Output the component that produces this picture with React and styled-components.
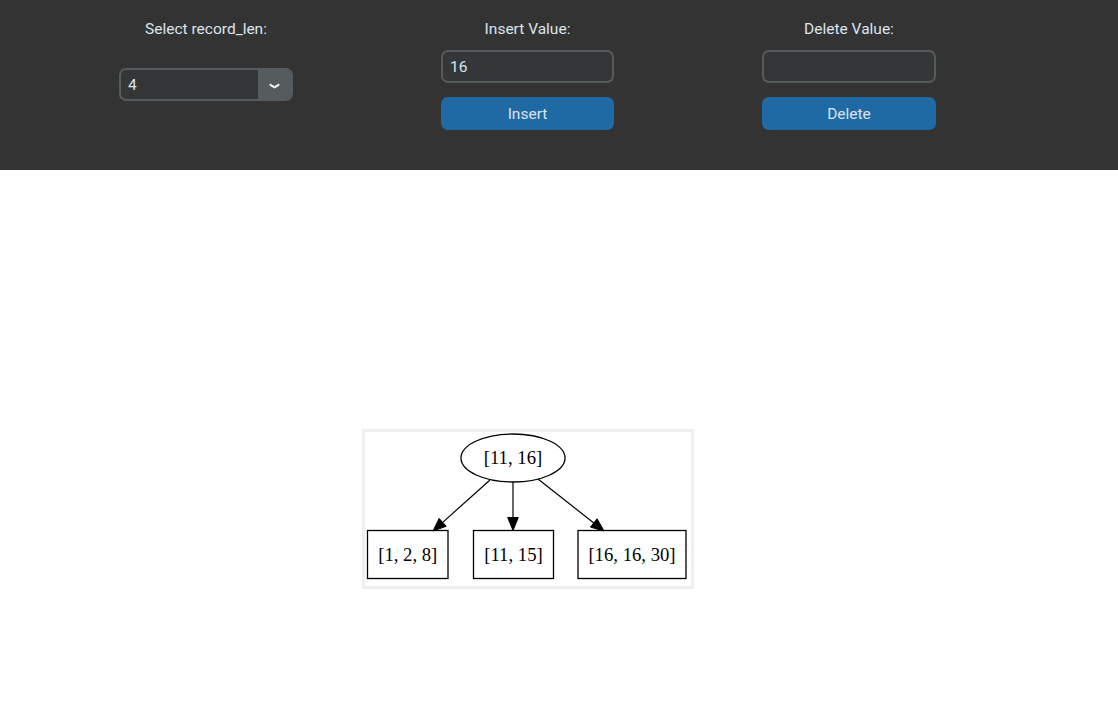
import React from 'react';
import styled, {createGlobalStyle} from 'styled-components';

const GlobalStyle = createGlobalStyle`
  html, body {
    margin: 0;
    padding: 0;
    background: #ffffff;
  }
  body {
    font-family: Roboto, "Liberation Sans", sans-serif;
  }
`

const Header = styled.header`
  height: 170px;
  background-color: #333333;
`
const HeaderInner = styled.div`
  display: flex;
  padding-left: 119px;
  gap: 148px;
`
const Column = styled.div`
  width: ${p => p.w}px;
  display: flex;
  flex-direction: column;
  align-items: stretch;
  padding-top: 20px;
`
const Label = styled.div`
  color: #dce4ee;
  font-size: 15.5px;
  line-height: 18px;
  text-align: center;
  margin-bottom: ${p => p.gap}px;
`
const Field = styled.div`
  height: 33px;
  box-sizing: border-box;
  border: 2px solid #565b5e;
  border-radius: 7px;
  background-color: #343638;
  color: #dce4ee;
  font-size: 15.5px;
  display: flex;
  align-items: center;
  padding-left: 7px;
  overflow: hidden;
`
const Combo = styled(Field)`
  padding-left: 0;
  justify-content: space-between;
`
const ComboValue = styled.span`
  padding-left: 7px;
`
const ComboArrow = styled.div`
  width: 33px;
  height: 100%;
  background-color: #565b5e;
  display: flex;
  align-items: center;
  justify-content: center;
  padding-top: 2px;
  box-sizing: border-box;
`
const Button = styled.div`
  height: 33px;
  margin-top: 14px;
  border-radius: 7px;
  background-color: #1f6aa5;
  color: #dce4ee;
  font-size: 15.5px;
  display: flex;
  align-items: center;
  justify-content: center;
`

const Main = styled.main`
  width: 1056px;
  display: flex;
  justify-content: center;
  padding-top: 259px;
`
const Frame = styled.div`
  width: 326px;
  height: 154px;
  border: 3px solid #efefef;
  background: #ffffff;
`

const Chevron = () => (
  <svg width="11" height="6" viewBox="0 0 11 6">
    <path d="M1 1 L5.5 3.6 L10 1 L10 2.4 L5.5 5 L1 2.4 Z" fill="#eef2f5" stroke="#eef2f5" strokeWidth="1" strokeLinejoin="round"/>
  </svg>
)

const Arrow = ({x1, y1, x2, y2}) => {
  const dx = x2 - x1
  const dy = y2 - y1
  const len = Math.hypot(dx, dy)
  const ux = dx / len
  const uy = dy / len
  const bx = x2 - ux * 13
  const by = y2 - uy * 13
  const px = -uy * 5.3
  const py = ux * 5.3
  return (
    <g>
      <line x1={x1} y1={y1} x2={bx} y2={by} stroke="#000" strokeWidth="1.2"/>
      <polygon points={`${x2},${y2} ${bx + px},${by + py} ${bx - px},${by - py}`} fill="#000" stroke="#000" strokeWidth="1"/>
    </g>
  )
}

const TreeNode = ({x, y, w, h, label}) => (
  <g>
    <rect x={x} y={y} width={w} height={h} fill="none" stroke="#000" strokeWidth="1.3"/>
    <text x={x + w / 2} y={y + h / 2 + 6} textAnchor="middle" fontFamily="'Liberation Serif', serif" fontSize="18.7">{label}</text>
  </g>
)

const Tree = () => (
  <svg width="326" height="154" viewBox="365 432 326 154">
    <ellipse cx="513" cy="458" rx="52" ry="24" fill="none" stroke="#000" strokeWidth="1.3"/>
    <text x="513" y="464" textAnchor="middle" fontFamily="'Liberation Serif', serif" fontSize="18.7">[11, 16]</text>
    <Arrow x1={490} y1={480} x2={433} y2={531}/>
    <Arrow x1={513} y1={482} x2={513} y2={530.5}/>
    <Arrow x1={538} y1={479} x2={604} y2={531}/>
    <TreeNode x={367.5} y={530.5} w={80.5} h={48} label="[1, 2, 8]"/>
    <TreeNode x={473.5} y={530.5} w={80} h={48} label="[11, 15]"/>
    <TreeNode x={578} y={530.5} w={108} h={48} label="[16, 16, 30]"/>
  </svg>
)

const App = () => {
  return (
    <>
      <GlobalStyle/>
      <Header>
        <HeaderInner>
          <Column w={174}>
            <Label gap={30}>Select record_len:</Label>
            <Combo>
              <ComboValue>4</ComboValue>
              <ComboArrow><Chevron/></ComboArrow>
            </Combo>
          </Column>
          <Column w={173}>
            <Label gap={12}>Insert Value:</Label>
            <Field>16</Field>
            <Button>Insert</Button>
          </Column>
          <Column w={174}>
            <Label gap={12}>Delete Value:</Label>
            <Field></Field>
            <Button>Delete</Button>
          </Column>
        </HeaderInner>
      </Header>
      <Main>
        <Frame>
          <Tree/>
        </Frame>
      </Main>
    </>
  );
}

export default App;
